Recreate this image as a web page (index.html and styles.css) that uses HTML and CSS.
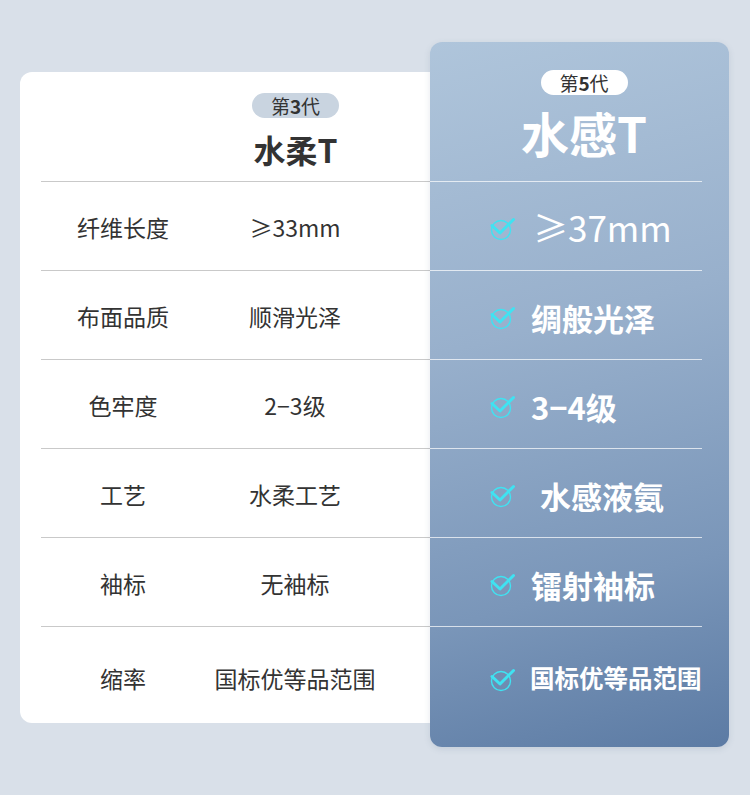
FILE: index.html
```html
<!DOCTYPE html>
<html lang="zh">
<head>
<meta charset="utf-8">
<link rel="stylesheet" href="styles.css">
</head>
<body>
<div class="page">
  <div class="card old">
    <div class="head">
      <span class="badge grey">第<b>3</b>代</span>
      <div class="title">水柔T</div>
    </div>
    <div class="row"><span class="c1">纤维长度</span><span class="c2">≥33mm</span></div>
    <div class="row"><span class="c1">布面品质</span><span class="c2">顺滑光泽</span></div>
    <div class="row"><span class="c1">色牢度</span><span class="c2">2−3级</span></div>
    <div class="row"><span class="c1">工艺</span><span class="c2">水柔工艺</span></div>
    <div class="row"><span class="c1">袖标</span><span class="c2">无袖标</span></div>
    <div class="row last"><span class="c1">缩率</span><span class="c2">国标优等品范围</span></div>
  </div>
  <div class="card new">
    <div class="head">
      <span class="badge white">第<b>5</b>代</span>
      <div class="title">水感T</div>
    </div>
    <div class="row first"><svg class="chk" viewBox="0 0 28 24"><circle cx="12" cy="13" r="9.5"/><path d="M3 8.5 L11 16 L24.5 2.5"/></svg><span class="v thin">≥37mm</span></div>
    <div class="row"><svg class="chk" viewBox="0 0 28 24"><circle cx="12" cy="13" r="9.5"/><path d="M3 8.5 L11 16 L24.5 2.5"/></svg><span class="v">绸般光泽</span></div>
    <div class="row"><svg class="chk" viewBox="0 0 28 24"><circle cx="12" cy="13" r="9.5"/><path d="M3 8.5 L11 16 L24.5 2.5"/></svg><span class="v">3−4级</span></div>
    <div class="row"><svg class="chk" viewBox="0 0 28 24"><circle cx="12" cy="13" r="9.5"/><path d="M3 8.5 L11 16 L24.5 2.5"/></svg><span class="v shift">水感液氨</span></div>
    <div class="row"><svg class="chk" viewBox="0 0 28 24"><circle cx="12" cy="13" r="9.5"/><path d="M3 8.5 L11 16 L24.5 2.5"/></svg><span class="v">镭射袖标</span></div>
    <div class="row last"><svg class="chk" viewBox="0 0 28 24"><circle cx="12" cy="13" r="9.5"/><path d="M3 8.5 L11 16 L24.5 2.5"/></svg><span class="v small">国标优等品范围</span></div>
  </div>
</div>
</body>
</html>
```
FILE: styles.css
```css
html, body {
  margin: 0;
  padding: 0;
  background: #d9e0e9;
  font-family: "Noto Sans CJK SC", "Noto Sans", sans-serif;
}
.page {
  width: 750px;
  height: 795px;
  display: flex;
  align-items: flex-start;
  padding-left: 20px;
  box-sizing: border-box;
}
.card {
  display: flex;
  flex-direction: column;
}
.old {
  width: 410px;
  margin-top: 72px;
  height: 651px;
  background: #fff;
  border-radius: 12px 0 0 12px;
  color: #333;
}
.new {
  width: 299px;
  margin-top: 42px;
  height: 705px;
  border-radius: 12px;
  background: linear-gradient(165deg, #afc5db 0%, #98b0cc 40%, #7a96b9 75%, #5c7ba4 100%);
  color: #fff;
  box-shadow: 0 2px 6px rgba(80, 100, 130, 0.15);
}
.head {
  display: flex;
  flex-direction: column;
  align-items: center;
  box-sizing: border-box;
}
.old .head {
  height: 110px;
  padding: 21px 0 0 120px;
  border-bottom: 1px solid #c9c9c9;
  margin-left: 21px;
}
.new .head {
  height: 140px;
  padding-top: 28px;
  border-bottom: 1px solid rgba(255, 255, 255, 0.7);
  margin-right: 27px;
  padding-left: 36px;
}
.badge {
  display: inline-flex;
  align-items: center;
  justify-content: center;
  width: 87px;
  height: 25px;
  border-radius: 13px;
  font-size: 19px;
  line-height: 1;
  color: #333;
}
.badge b { font-weight: 700; }
.badge.grey { background: #c9d4e0; }
.badge.white { background: #fff; }
.old .title {
  font-size: 32px;
  font-weight: 700;
  line-height: 1;
  margin-top: 15px;
  color: #333;
}
.new .title {
  font-size: 48px;
  font-weight: 700;
  line-height: 1;
  margin-top: 13px;
  color: #fff;
}
.row {
  height: 89px;
  box-sizing: border-box;
  display: flex;
  align-items: center;
  flex-shrink: 0;
}
.old .row {
  margin-left: 21px;
  border-bottom: 1px solid #c9c9c9;
  font-size: 23px;
  padding-top: 2px;
}
.old .row.last {
  border-bottom: none;
  height: 96px;
  padding-top: 6px;
  padding-bottom: 0;
}
.c1 {
  width: 164px;
  text-align: center;
}
.c2 {
  width: 180px;
  text-align: center;
  font-size: 23px;
}
.new .row {
  margin-right: 27px;
  padding-left: 59px;
  border-bottom: 1px solid rgba(255, 255, 255, 0.7);
  padding-top: 4px;
}
.new .row.first { padding-top: 0; }
.new .row.last {
  border-bottom: none;
  height: 120px;
  align-items: flex-start;
  padding-top: 39px;
}
.chk {
  width: 28px;
  height: 24px;
  flex-shrink: 0;
  fill: none;
  stroke: #3fe3f2;
  margin-top: 2px;
}
.new .row.first .chk { margin-top: 6px; }
.chk circle { stroke-width: 1.4; }
.chk path { stroke-width: 3; stroke-linecap: round; stroke-linejoin: round; }
.v {
  margin-left: 14px;
  font-size: 31px;
  font-weight: 700;
  line-height: 1;
  white-space: nowrap;
}
.v.thin {
  font-weight: 400;
  font-size: 35px;
  margin-left: 16px;
}
.v.shift { margin-left: 23px; }
.v.small {
  font-size: 24.5px;
  margin-left: 13px;
}
```
